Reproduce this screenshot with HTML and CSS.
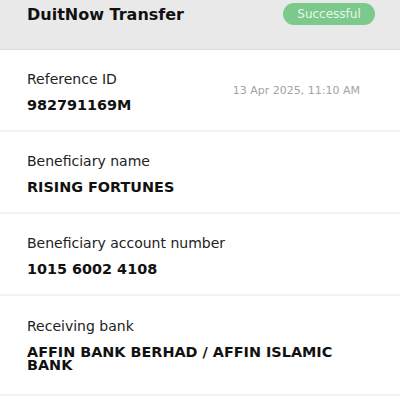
FILE: index.html
```html
<!DOCTYPE html>
<html lang="en">
<head>
    <meta charset="UTF-8">
    <meta name="viewport" content="width=device-width, initial-scale=1.0">
    <title>DuitNow Transfer</title>
    <link rel="stylesheet" href="styles.css">
</head>
<body>

    <div class="header">
        <h1 class="title">DuitNow Transfer</h1>
        <span class="badge">Successful</span>
    </div>

    <div class="section">
        <div class="row">
            <div>
                <div class="label">Reference ID</div>
                <div class="value">982791169M</div>
            </div>
            <div class="date">13 Apr 2025, 11:10 AM</div>
        </div>
    </div>

    <div class="section">
        <div class="label">Beneficiary name</div>
        <div class="value">RISING FORTUNES</div>
    </div>

    <div class="section">
        <div class="label">Beneficiary account number</div>
        <div class="value">1015 6002 4108</div>
    </div>

    <div class="section last">
        <div class="label">Receiving bank</div>
        <div class="value">AFFIN BANK BERHAD / AFFIN ISLAMIC BANK</div>
    </div>

</body>
</html>
```

FILE: styles.css
```css
body {
    font-family: 'DejaVu Sans', sans-serif;
    margin: 0;
    background-color: #fff;
    color: #111;
}

.header {
    display: flex;
    justify-content: space-between;
    align-items: flex-start;
    height: 50px;
    padding: 3px 25px 0 27px;
    box-sizing: border-box;
    background-color: #e9e9e9;
    border-bottom: 1px solid #dedede;
}

.title {
    margin: 2px 0 0;
    font-size: 16px;
    line-height: 20px;
    font-weight: bold;
    color: #111;
}

.badge {
    width: 92px;
    height: 22px;
    line-height: 22px;
    border-radius: 11px;
    background-color: #7cc98c;
    color: #e8f5ea;
    font-size: 12px;
    text-align: center;
}

.section {
    padding: 19px 27px 18px;
    border-bottom: 2px solid #f2f2f2;
}

.section.last {
    padding-top: 20px;
    padding-bottom: 22px;
}

.row {
    display: flex;
    justify-content: space-between;
    align-items: center;
}

.label {
    font-size: 14px;
    line-height: 20px;
    color: #222;
}

.value {
    margin-top: 10px;
    font-size: 14.4px;
    line-height: 13px;
    font-weight: bold;
    max-width: 330px;
}

.date {
    margin-right: 13px;
    font-size: 11px;
    color: #a3a3a3;
}
```
